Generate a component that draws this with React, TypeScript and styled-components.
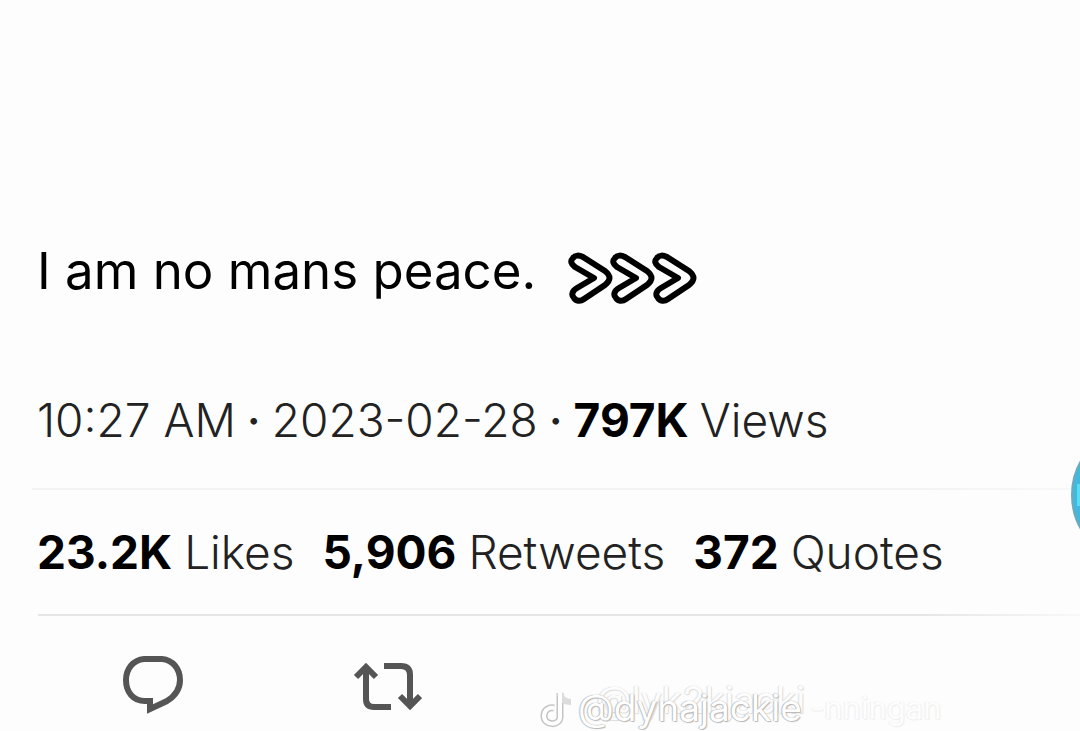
import React from "react";
import styled, { createGlobalStyle } from "styled-components";

const GlobalStyle = createGlobalStyle`
  * { box-sizing: border-box; }
  body {
    margin: 0;
    background: #fdfdfd;
    color: #0a0a0a;
    font-family: Inter, "Liberation Sans", sans-serif;
    overflow-x: hidden;
  }
`;

const Page = styled.main`
  position: relative;
  min-height: 100vh;
  padding-top: 238px;
  overflow: hidden;
`;

const TweetText = styled.p`
  display: flex;
  align-items: center;
  gap: 32px;
  margin: 0;
  padding-left: 37px;
  font-size: 51px;
  line-height: 66px;
  white-space: nowrap;
  color: #000;
`;

const Chevrons = styled.svg`
  width: 132px;
  height: 52px;
  margin-top: 14px;
`;

const Meta = styled.div`
  display: flex;
  gap: 11px;
  margin-top: 84px;
  padding: 0 37px 36px;
  font-size: 46px;
  font-weight: 300;
  line-height: 64px;
  white-space: nowrap;
  color: #222;
`;

const Dot = styled.span`
  font-weight: 500;
`;

const Strong = styled.strong`
  font-weight: 700;
  color: #000;
`;

const Rule = styled.hr<{ $tone: string; $inset: number }>`
  height: 2px;
  margin: 0 0 0 ${(p) => p.$inset}px;
  border: 0;
  background: linear-gradient(90deg, ${(p) => p.$tone} 85%, #f8f8f8);
`;

const Stats = styled.div`
  display: flex;
  gap: 28px;
  padding: 32px 37px;
  font-size: 46px;
  line-height: 60px;
  white-space: nowrap;
`;

const Stat = styled.a`
  display: flex;
  gap: 12px;
  color: #222;
  font-weight: 300;
  text-decoration: none;
`;

const Actions = styled.div`
  display: flex;
  gap: 154px;
  padding: 32px 116px 0;
`;

const Action = styled.button`
  display: flex;
  width: 76px;
  height: 76px;
  padding: 0;
  border: 0;
  background: none;
`;

const Bubble = styled.span`
  position: absolute;
  top: 426px;
  right: -129px;
  width: 138px;
  height: 138px;
  border: 2px solid #6fa9bb;
  border-radius: 50%;
  background: #42b8dc;

  &::after {
    content: "";
    position: absolute;
    left: 4px;
    top: 56px;
    width: 20px;
    height: 22px;
    background: #5cdcf0;
  }
`;

const Watermark = styled.div`
  position: absolute;
  left: 540px;
  top: 682px;
  font-size: 37px;
  line-height: 44px;
  color: #fff;
  text-shadow: 0 0 1px #999, 1px 1px 1px #bbb, -1px 0 1px #ccc;
`;

const Note = styled.svg`
  position: absolute;
  left: 0;
  top: 6px;
`;

const Ghost = styled.span<{ $x: number; $y: number; $opacity: number; $size?: number }>`
  position: absolute;
  left: ${(p) => p.$x}px;
  top: ${(p) => p.$y}px;
  font-size: ${(p) => p.$size ?? 37}px;
  white-space: nowrap;
  opacity: ${(p) => p.$opacity};
`;

const chevron =
  "M6 15 L25 26 L8 36 C3 39 2 43 5 46 C7 49 11 50 15 47 L36 33 C42 28 42 24 36 19 L14 5 C10 3 6 3 4 6 C1 9 2 12 6 15 Z";

export default function App() {
  return (
    <>
      <GlobalStyle />
      <Page>
        <TweetText>
          <span>I am no mans peace.</span>
          <Chevrons viewBox="0 0 132 52" aria-hidden="true">
            {[1, 43, 85].map((x) => (
              <path
                key={x}
                transform={`translate(${x} 0)`}
                d={chevron}
                fill="none"
                stroke="#000"
                strokeWidth="6"
                strokeLinejoin="round"
              />
            ))}
          </Chevrons>
        </TweetText>
        <Meta>
          <time dateTime="2023-02-28T10:27">10:27 AM</time>
          <Dot>·</Dot>
          <span>2023-02-28</span>
          <Dot>·</Dot>
          <Strong>797K</Strong>
          <span>Views</span>
        </Meta>
        <Rule $tone="#f3f3f3" $inset={32} />
        <Stats>
          <Stat href="#likes">
            <Strong>23.2K</Strong>
            <span>Likes</span>
          </Stat>
          <Stat href="#retweets">
            <Strong>5,906</Strong>
            <span>Retweets</span>
          </Stat>
          <Stat href="#quotes">
            <Strong>372</Strong>
            <span>Quotes</span>
          </Stat>
        </Stats>
        <Rule $tone="#e6e6e6" $inset={38} />
        <Actions>
          <Action aria-label="Reply">
            <svg width="76" height="76" viewBox="0 0 76 76" fill="none" stroke="#555" strokeWidth="6">
              <path d="M28 11 H46 C57 12 64 21 64 32 C64 41 59 48 51 53 L34 61 V53 H29 C17 53 10 44 10 32 C10 21 17 12 28 11 Z" />
            </svg>
          </Action>
          <Action aria-label="Retweet">
            <svg width="76" height="76" viewBox="0 0 76 76" fill="none" stroke="#555" strokeWidth="6">
              <path d="M10 29 L20 19 L30 29 M20 20 V51 Q20 59 28 59 H45" />
              <path d="M38 18 H55 Q64 18 64 27 V57 M54 48 L64 58 L74 48" />
            </svg>
          </Action>
        </Actions>
        <Bubble />
        <Watermark>
          <Note width="40" height="44" viewBox="0 0 40 44" fill="none" aria-hidden="true">
            <path d="M20 5 V29 C20 38 4 38 4 28 C4 22 9 19 14 20" stroke="#c4c4c4" strokeWidth="7" />
            <path d="M20 5 C21 11 25 14 31 14" stroke="#dcdcdc" strokeWidth="6" />
            <path d="M20 5 V29 C20 38 4 38 4 28 C4 22 9 19 14 20" stroke="#fff" strokeWidth="4" />
          </Note>
          <Ghost $x={56} $y={-4} $opacity={0.45}>@lyk2kjacki</Ghost>
          <Ghost $x={38} $y={4} $opacity={1}>@dynajackie</Ghost>
          <Ghost $x={270} $y={4} $opacity={0.2} $size={31}>-nningan</Ghost>
        </Watermark>
      </Page>
    </>
  );
}
